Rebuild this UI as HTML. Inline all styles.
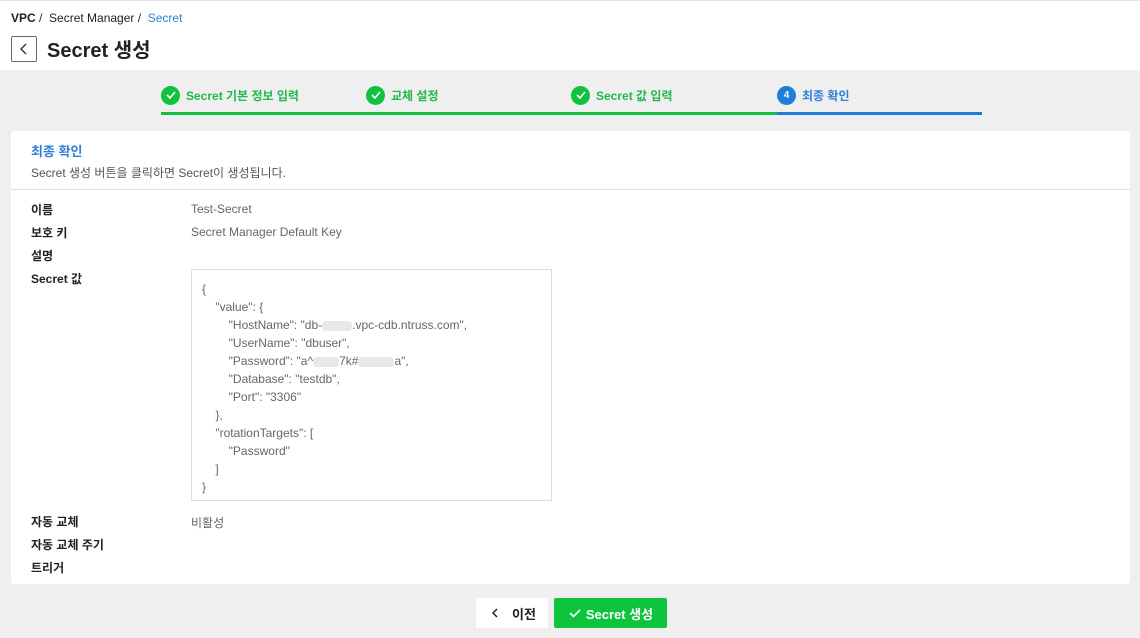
<!DOCTYPE html>
<html><head><meta charset="utf-8"><style>
*{margin:0;padding:0;box-sizing:border-box}
body{width:1140px;height:638px;background:#efefef;font-family:"Liberation Sans","Noto Sans CJK KR",sans-serif;position:relative;overflow:hidden;color:#222}
.a{position:absolute;white-space:nowrap}
.hdr{position:absolute;left:0;top:0;width:1140px;height:70px;background:#fff;border-top:1px solid #e4e4e4}
.step{position:absolute;top:86px;height:18px;display:flex;align-items:center;font-size:12px;font-weight:bold;color:#1fb94b}
.c{width:19px;height:19px;border-radius:50%;background:#10c23f;margin-right:6px;display:flex;align-items:center;justify-content:center}
.card{position:absolute;left:11px;top:131px;width:1119px;height:453px;background:#fff;border-radius:3px}
.lb{position:absolute;left:20px;font-size:12px;font-weight:bold;color:#222}
.vl{position:absolute;left:180px;font-size:12px;color:#666}
.code{position:absolute;left:180px;top:138px;width:361px;height:232px;border:1px solid #ddd;padding:10px 0 0 10px;font-size:12px;color:#666;line-height:18px}
.blur{display:inline-block;background:#e8e8e8;height:10px;vertical-align:middle;border-radius:4px}
</style></head><body>
<div class="hdr">
<div class="a" style="left:11px;top:10px;font-size:12px"><b>VPC</b> / &nbsp;Secret Manager / &nbsp;<span style="color:#2f7fd8">Secret</span></div>
<div class="a" style="left:11px;top:35px;width:26px;height:26px;border:1px solid #5a6a80;border-radius:2px"><svg width="24" height="24" viewBox="0 0 24 24"><path d="M14 7l-5 5 5 5" fill="none" stroke="#333" stroke-width="1.4"/></svg></div>
<div class="a" style="left:47px;top:33px;font-size:20px;font-weight:bold;color:#222">Secret 생성</div>
</div>
<div class="a" style="left:161px;top:112px;width:616px;height:3px;background:#10c23f"></div>
<div class="a" style="left:777px;top:112px;width:205px;height:3px;background:#1e7fd8"></div>
<div class="step" style="left:161px"><div class="c"><svg width="12" height="12" viewBox="0 0 12 12"><path d="M2 6l3 3 5-6" fill="none" stroke="#fff" stroke-width="1.6"/></svg></div>Secret 기본 정보 입력</div>
<div class="step" style="left:366px"><div class="c"><svg width="12" height="12" viewBox="0 0 12 12"><path d="M2 6l3 3 5-6" fill="none" stroke="#fff" stroke-width="1.6"/></svg></div>교체 설정</div>
<div class="step" style="left:571px"><div class="c"><svg width="12" height="12" viewBox="0 0 12 12"><path d="M2 6l3 3 5-6" fill="none" stroke="#fff" stroke-width="1.6"/></svg></div>Secret 값 입력</div>
<div class="step" style="left:777px;color:#2f7fd8"><div class="c" style="background:#1e7fd8;color:#fff;font-size:10px">4</div>최종 확인</div>
<div class="card">
<div class="a" style="left:20px;top:10px;font-size:13px;color:#2f7fd8;font-weight:bold">최종 확인</div>
<div class="a" style="left:20px;top:33px;font-size:12px;color:#555">Secret 생성 버튼을 클릭하면 Secret이 생성됩니다.</div>
<div class="a" style="left:0;top:58px;width:1119px;height:1px;background:#e0e0e0"></div>
<div class="lb" style="top:70px">이름</div><div class="vl" style="top:71px">Test-Secret</div>
<div class="lb" style="top:93px">보호 키</div><div class="vl" style="top:94px">Secret Manager Default Key</div>
<div class="lb" style="top:116px">설명</div>
<div class="lb" style="top:139px">Secret 값</div>
<div class="code">{<br>&nbsp;&nbsp;&nbsp;&nbsp;"value": {<br>&nbsp;&nbsp;&nbsp;&nbsp;&nbsp;&nbsp;&nbsp;&nbsp;"HostName": "db-<span class="blur" style="width:30px"></span>.vpc-cdb.ntruss.com",<br>&nbsp;&nbsp;&nbsp;&nbsp;&nbsp;&nbsp;&nbsp;&nbsp;"UserName": "dbuser",<br>&nbsp;&nbsp;&nbsp;&nbsp;&nbsp;&nbsp;&nbsp;&nbsp;"Password": "a^<span class="blur" style="width:26px"></span>7k#<span class="blur" style="width:36px"></span>a",<br>&nbsp;&nbsp;&nbsp;&nbsp;&nbsp;&nbsp;&nbsp;&nbsp;"Database": "testdb",<br>&nbsp;&nbsp;&nbsp;&nbsp;&nbsp;&nbsp;&nbsp;&nbsp;"Port": "3306"<br>&nbsp;&nbsp;&nbsp;&nbsp;},<br>&nbsp;&nbsp;&nbsp;&nbsp;"rotationTargets": [<br>&nbsp;&nbsp;&nbsp;&nbsp;&nbsp;&nbsp;&nbsp;&nbsp;"Password"<br>&nbsp;&nbsp;&nbsp;&nbsp;]<br>}</div>
<div class="lb" style="top:382px">자동 교체</div><div class="vl" style="top:383px">비활성</div>
<div class="lb" style="top:405px">자동 교체 주기</div>
<div class="lb" style="top:428px">트리거</div>
</div>
<div class="a" style="left:476px;top:598px;width:72px;height:30px;background:#fff;border-radius:2px;display:flex;align-items:center;justify-content:center;font-size:13px;font-weight:bold"><svg width="14" height="14" viewBox="0 0 14 14" style="margin-right:10px"><path d="M9 3l-4 4 4 4" fill="none" stroke="#222" stroke-width="1.5"/></svg>이전</div>
<div class="a" style="left:554px;top:598px;width:113px;height:30px;background:#0dc43c;border-radius:2px;display:flex;align-items:center;justify-content:center;font-size:13px;font-weight:bold;color:#fff"><svg width="14" height="14" viewBox="0 0 14 14" style="margin-right:4px"><path d="M2 7l3.5 3.5L12 4" fill="none" stroke="#fff" stroke-width="1.6"/></svg>Secret 생성</div>
</body></html>
